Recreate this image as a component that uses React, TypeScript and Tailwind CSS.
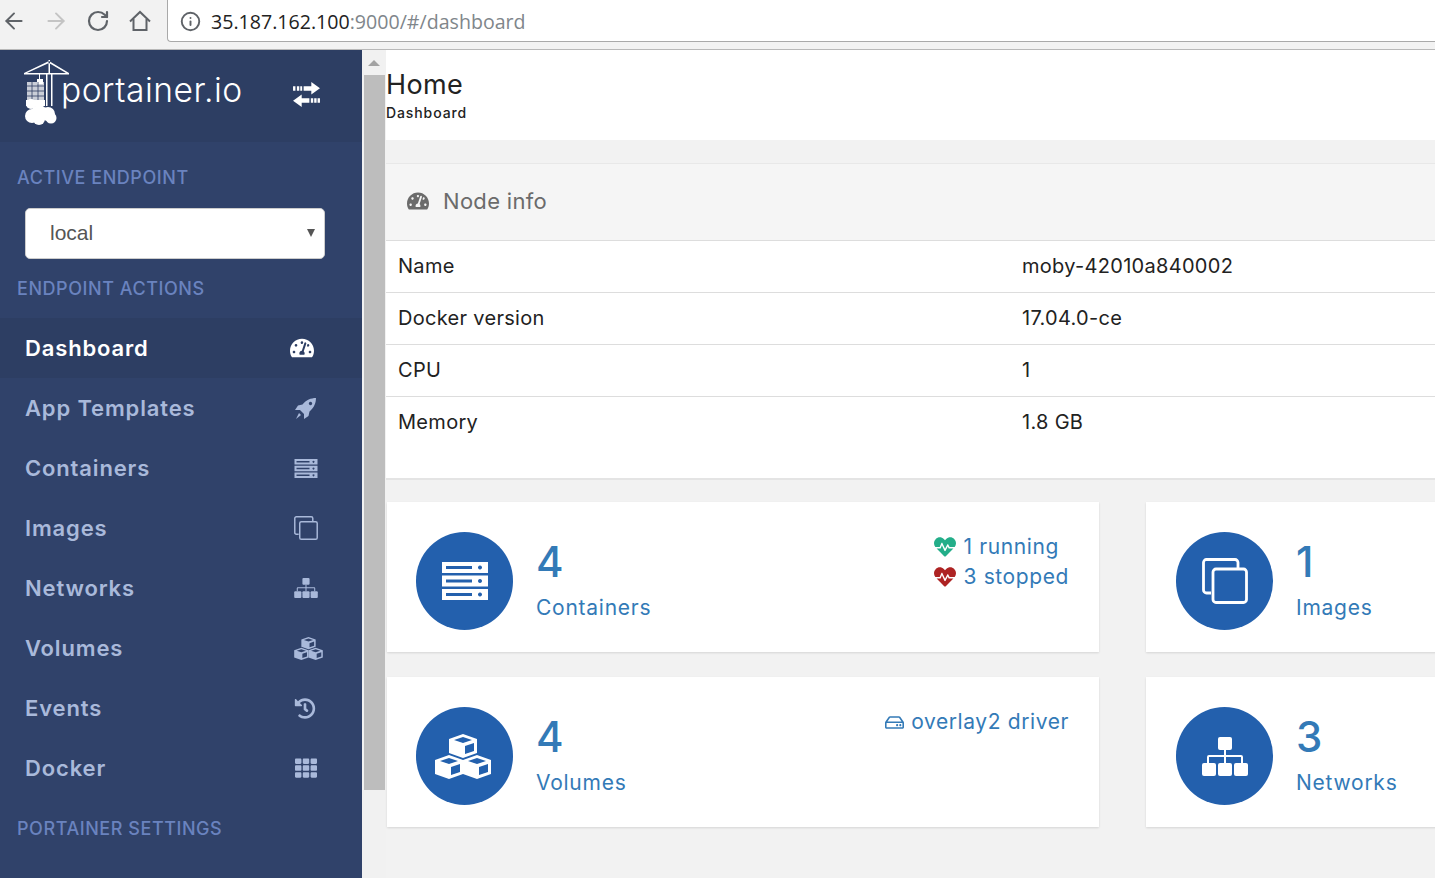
import type { ReactNode } from "react";
import { ArrowLeft, ArrowRight, Info, RotateCw } from "lucide-react";
import { FaHeartbeat, FaHistory, FaRegHdd, FaTachometerAlt, FaTh } from "react-icons/fa";

type IconProps = { className?: string };

const ServerIcon = ({ className }: IconProps) => (
  <svg viewBox="0 0 46 38" className={className} fill="currentColor" fillRule="evenodd">
    <path d="M0 0h46v11H0zM4 4v3h26V4zM38 3.500a2 2 0 1 0 .01 0z" />
    <path d="M0 13.500h46v11H0zM4 17.500v3h26v-3zM38 17a2 2 0 1 0 .01 0z" />
    <path d="M0 27h46v11H0zM4 31v3h26v-3zM38 30.500a2 2 0 1 0 .01 0z" />
  </svg>
);

const CloneIcon = ({ className }: IconProps) => (
  <svg viewBox="0 0 46 46" className={className} fill="none" stroke="currentColor" strokeWidth="2.8">
    <path d="M9 35H4.500a3 3 0 0 1-3-3V4.500a3 3 0 0 1 3-3H33a3 3 0 0 1 3 3V10" />
    <rect x="11" y="11" width="33.500" height="33.500" rx="3" />
  </svg>
);

const cube = "M14 0 28 5V19L14 24 0 19V5ZM14 3 5 6 14 9 23 6ZM16 12V20L25 17V9Z";

const CubesIcon = ({ className }: IconProps) => (
  <svg viewBox="0 0 56 45" className={className} fill="currentColor" fillRule="evenodd">
    <path d={cube} transform="translate(14 0)" />
    <path d={cube} transform="translate(0 21)" />
    <path d={cube} transform="translate(28 21)" />
  </svg>
);

const SitemapIcon = ({ className }: IconProps) => (
  <svg viewBox="0 0 46 39" className={className} fill="currentColor">
    <rect x="16" width="14" height="13" rx="2" />
    <rect y="26" width="14" height="13" rx="2" />
    <rect x="16" y="26" width="14" height="13" rx="2" />
    <rect x="32" y="26" width="14" height="13" rx="2" />
    <path d="M22 13h2v5h15a2 2 0 0 1 2 2v6h-2v-6H24v6h-2v-6H7v6H5v-6a2 2 0 0 1 2-2h15z" />
  </svg>
);

const RocketIcon = ({ className }: IconProps) => (
  <svg viewBox="0 0 21 21" className={className} fill="currentColor" fillRule="evenodd">
    <path d="M21 0c-5 0-10 2-13.500 6.500L3 7.500 0 12h5l4 4v5l4.500-3 1-4.500C19 10 21 5 21 0zM15.500 3.800a1.700 1.700 0 1 0 .01 0z" />
    <path d="M4 15l2 2-5 4z" />
  </svg>
);

const SwitchIcon = ({ className }: IconProps) => (
  <svg viewBox="0 0 28 26" className={className} fill="currentColor">
    <path d="M19 0l9 6.500L19 13V9H11V4.500h8zM0 4.500h2.500V9H0zM4 4.500h2.500V9H4zM7.500 4.500H9.500V9H7.500z" />
    <path d="M9 13v4h8v4.500H9V26L0 19.500zM18.500 17H21v4.500h-2.500zM22 17h2.500v4.500H22zM25.500 17H28v4.500h-2.500z" />
  </svg>
);

const HomeIcon = ({ className }: IconProps) => (
  <svg viewBox="0 0 22 22" className={className} fill="none" stroke="currentColor" strokeWidth="2">
    <path d="M1 11.500 11 2l10 9.500" />
    <path d="M4.500 9v11h13V9" />
  </svg>
);

const Logo = () => (
  <svg viewBox="0 0 48 66" className="h-[66px] w-[48px] shrink-0 text-white" fill="currentColor">
    <path d="M0 13h45v1.500H0zM22 14h1.500v32H22zM27 14h1.500v32H27z" />
    <path d="M25 1 0 13h3L25 3l17 10h3zM24.500 0H26v13h-1.500z" />
    <path d="M15 14h1v6h-1zM13 19h6v5h-6z" />
    <path d="M3 22h17v18H3z" opacity=".75" />
    <path d="M3 26h17M3 31h17M3 36h17M8 22v18M14 22v18" stroke="#2d3e63" strokeWidth=".8" />
    <path d="M2 40h19v6H2z" />
    <circle cx="7" cy="44" r="5" />
    <circle cx="8" cy="56" r="7" />
    <circle cx="15" cy="53" r="8" />
    <circle cx="24" cy="54" r="7" />
    <circle cx="27" cy="58" r="5.500" />
    <circle cx="15" cy="59" r="6" />
  </svg>
);

const navItems: { label: string; icon: ReactNode; active?: boolean }[] = [
  { label: "Dashboard", icon: <FaTachometerAlt className="-ml-[4px] h-[24px] w-[24px]" />, active: true },
  { label: "App Templates", icon: <RocketIcon className="ml-[1px] h-[21px] w-[21px]" /> },
  { label: "Containers", icon: <ServerIcon className="h-[19px] w-[24px]" /> },
  { label: "Images", icon: <CloneIcon className="h-[24px] w-[24px]" /> },
  { label: "Networks", icon: <SitemapIcon className="h-[20px] w-[24px]" /> },
  { label: "Volumes", icon: <CubesIcon className="h-[23px] w-[29px]" /> },
  { label: "Events", icon: <FaHistory className="h-[21px] w-[22px]" /> },
  { label: "Docker", icon: <FaTh className="h-[22px] w-[24px]" /> },
];

const nodeInfo = [
  ["Name", "moby-42010a840002"],
  ["Docker version", "17.04.0-ce"],
  ["CPU", "1"],
  ["Memory", "1.8 GB"],
];

const SectionTitle = ({ children }: { children: ReactNode }) => (
  <div className="pl-[17px] text-[18px] leading-[22px] font-medium tracking-[0.55px] text-[#6a83bf]">{children}</div>
);

const StatCard = ({
  icon,
  value,
  label,
  aside,
  second,
}: {
  icon: ReactNode;
  value: string;
  label: string;
  aside?: ReactNode;
  second?: boolean;
}) => (
  <div
    className={
      second
        ? "flex h-[150px] items-center bg-white pr-[30px] pl-[30px] shadow-[0_1px_2px_rgba(0,0,0,0.12)]"
        : "flex h-[150px] items-center bg-white pr-[30px] pl-[29px] shadow-[0_1px_2px_rgba(0,0,0,0.12)]"
    }
  >
    <div className="mt-[8px] flex h-[98px] w-[97px] shrink-0 items-center justify-center rounded-full bg-[#2360ad] text-white">
      {icon}
    </div>
    <div className="mt-[4px] ml-[23px] text-[#337ab7]">
      <div className="text-[42px] leading-[50px] font-medium">{value}</div>
      <div className="mt-[8px] text-[21px] leading-[26px] tracking-[0.75px]">{label}</div>
    </div>
    {aside && (
      <div className="mt-[30px] ml-auto self-start text-[21px] leading-[30px] tracking-[0.6px] text-[#337ab7]">
        {aside}
      </div>
    )}
  </div>
);

export default function App() {
  return (
    <div className="flex h-[878px] w-[1435px] flex-col overflow-hidden bg-[#f2f2f2] font-[Inter,sans-serif] text-[#222]">
      <div className="flex h-[50px] shrink-0 items-start border-b border-[#b8b8b8] bg-[#f2f2f2]">
        <div className="flex h-[42px] w-[167px] shrink-0 items-center text-[#5f6368]">
          <ArrowLeft className="ml-[1px] h-[26px] w-[26px]" strokeWidth={1.8} />
          <ArrowRight className="ml-[16px] h-[26px] w-[26px] text-[#c4c4c4]" strokeWidth={1.8} />
          <RotateCw className="ml-[17px] h-[24px] w-[24px]" strokeWidth={2.2} />
          <HomeIcon className="ml-[19px] h-[22px] w-[22px]" />
        </div>
        <div className="flex h-[42px] flex-1 items-center rounded-bl-[4px] border border-t-0 border-r-0 border-[#a9a9a9] bg-white pt-[2px] pl-[12px] font-['Open_Sans',sans-serif] text-[19.6px]">
          <Info className="mr-[10px] h-[21px] w-[21px] text-[#5f6368]" strokeWidth={2.2} />
          <span className="text-[#222]">35.187.162.100</span>
          <span className="text-[#80868b]">:9000/#/dashboard</span>
        </div>
      </div>

      <div className="flex min-h-0 flex-1">
        <aside className="flex w-[362px] shrink-0 flex-col bg-[#30426a]">
          <div className="flex h-[92px] items-start bg-[#2d3e63] pt-[10px] pr-[42px] pl-[24px]">
            <Logo />
            <span className="mt-[8px] -ml-[11px] text-[33.6px] leading-[44px] font-light tracking-[0.5px] text-white">
              portainer.io
            </span>
            <SwitchIcon className="mt-[22px] ml-auto h-[25px] w-[27px] text-white" />
          </div>
          <div className="pt-[25px]">
            <SectionTitle>ACTIVE ENDPOINT</SectionTitle>
          </div>
          <div className="mt-[19px] ml-[25px] flex h-[51px] w-[300px] items-center justify-between rounded-[5px] border border-[#ccc] bg-white pr-[9px] pb-[2px] pl-[24px] font-['Liberation_Sans',sans-serif] text-[21px] text-[#555]">
            <span>local</span>
            <span className="h-0 w-0 border-x-[4.5px] border-t-[8px] border-x-transparent border-t-[#555]" />
          </div>
          <div className="mt-[19px]">
            <SectionTitle>ENDPOINT ACTIONS</SectionTitle>
          </div>
          <nav className="mt-[18px]">
            {navItems.map((item) => (
              <div
                key={item.label}
                className={
                  item.active
                    ? "flex h-[60px] items-center bg-[#2d3e63] pl-[25px] text-[22px] font-semibold tracking-[0.85px] text-white"
                    : "flex h-[60px] items-center pl-[25px] text-[22px] font-semibold tracking-[0.85px] text-[#a9b9da]"
                }
              >
                <span className="flex-1">{item.label}</span>
                <span className="flex w-[92px] justify-start pl-[24px]">{item.icon}</span>
              </div>
            ))}
          </nav>
          <div className="mt-[20px]">
            <SectionTitle>PORTAINER SETTINGS</SectionTitle>
          </div>
        </aside>

        <div className="flex w-[24px] shrink-0 flex-col items-center bg-[#f1f1f1]">
          <span className="mt-[10px] h-0 w-0 border-x-[6px] border-b-[6px] border-x-transparent border-b-[#a3a3a3]" />
          <div className="mt-[9px] h-[715px] w-[21px] bg-[#bdbdbd]" />
        </div>

        <main className="min-w-0 flex-1">
          <header className="h-[90px] bg-white pt-[18px]">
            <div className="text-[27px] leading-[34px] tracking-[0.4px] text-[#222]">Home</div>
            <div className="mt-[2px] text-[14px] leading-[18px] font-medium tracking-[0.9px] text-[#222]">
              Dashboard
            </div>
          </header>

          <section className="mt-[23px] w-[1100px] border-t border-b-2 border-t-[#e8e8e8] border-b-[#e4e4e4] bg-white pb-[29px]">
            <div className="flex h-[77px] items-center border-b border-[#ddd] bg-[#f5f5f5] pb-[2px] pl-[21px] text-[22px] tracking-[0.3px] text-[#6b6b6b]">
              <FaTachometerAlt className="h-[22px] w-[22px]" />
              <span className="ml-[14px]">Node info</span>
            </div>
            {nodeInfo.map(([name, value], i) => (
              <div
                key={name}
                className={
                  i < nodeInfo.length - 1
                    ? "flex h-[52px] items-center border-b border-[#ddd] pb-[2px] pl-[12px] text-[20px] tracking-[0.3px] text-[#222]"
                    : "flex h-[52px] items-center pb-[2px] pl-[12px] text-[20px] tracking-[0.3px] text-[#222]"
                }
              >
                <span className="w-[624px]">{name}</span>
                <span>{value}</span>
              </div>
            ))}
          </section>

          <div className="mt-[22px] ml-[1px] grid w-[1471px] grid-cols-[712px_712px] gap-x-[47px] gap-y-[25px]">
            <StatCard
              icon={<ServerIcon className="h-[38px] w-[46px]" />}
              value="4"
              label="Containers"
              aside={
                <>
                  <div className="flex items-center gap-[8px]">
                    <FaHeartbeat className="h-[22px] w-[22px] text-[#23ae89]" />
                    <span>1 running</span>
                  </div>
                  <div className="flex items-center gap-[8px]">
                    <FaHeartbeat className="h-[22px] w-[22px] text-[#ae2323]" />
                    <span>3 stopped</span>
                  </div>
                </>
              }
            />
            <StatCard second icon={<CloneIcon className="h-[46px] w-[46px]" />} value="1" label="Images" />
            <StatCard
              icon={<CubesIcon className="-ml-[3px] h-[45px] w-[56px]" />}
              value="4"
              label="Volumes"
              aside={
                <div className="flex items-center gap-[7px]">
                  <FaRegHdd className="h-[19px] w-[19px]" />
                  <span>overlay2 driver</span>
                </div>
              }
            />
            <StatCard second icon={<SitemapIcon className="h-[39px] w-[46px]" />} value="3" label="Networks" />
          </div>
        </main>
      </div>
    </div>
  );
}
